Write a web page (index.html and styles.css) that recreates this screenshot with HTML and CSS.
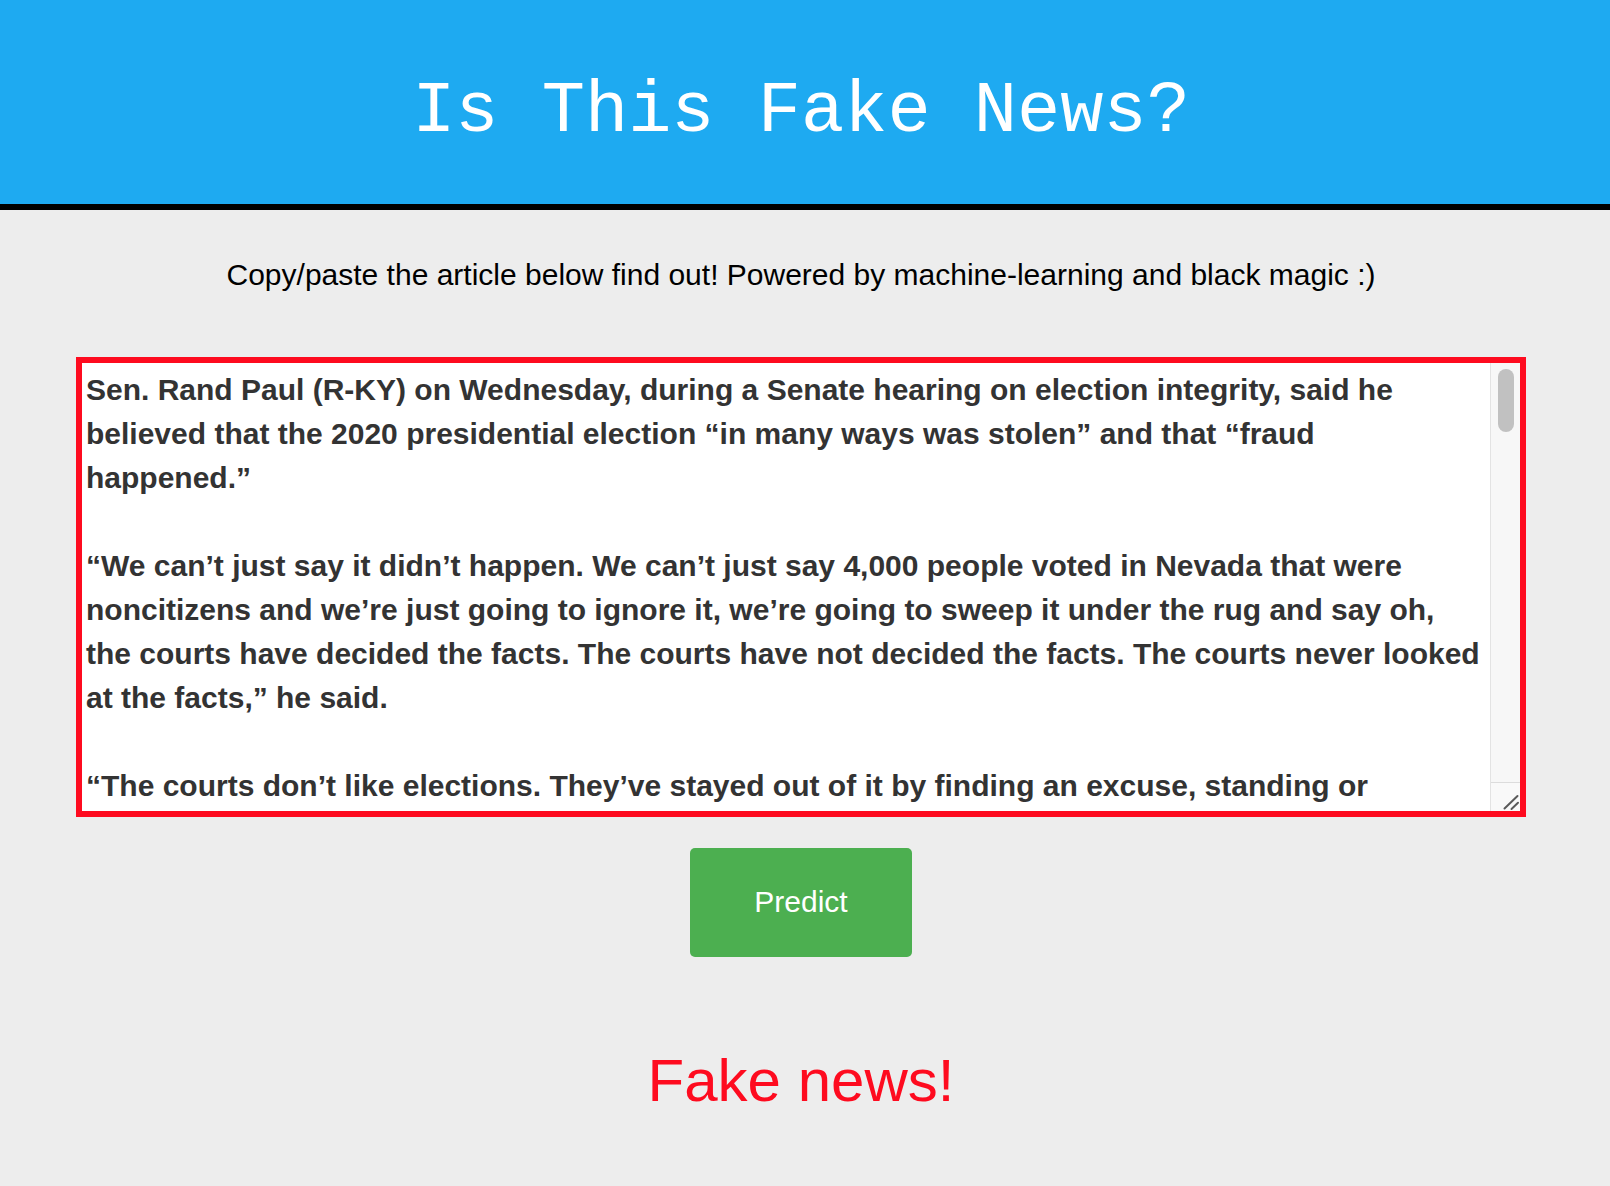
FILE: index.html
```html
<!DOCTYPE html>
<html lang="en">
<head>
<meta charset="utf-8">
<title>Is This Fake News?</title>
<link rel="stylesheet" href="styles.css">
</head>
<body>
<header class="hero">
  <h1 class="title">Is This Fake News?</h1>
</header>
<main class="content">
  <p class="lead">Copy/paste the article below find out! Powered by machine-learning and black magic :)</p>
  <form class="form">
    <div class="editor">
      <textarea class="article" name="article">Sen. Rand Paul (R-KY) on Wednesday, during a Senate hearing on election integrity, said he believed that the 2020 presidential election “in many ways was stolen” and that “fraud happened.”

“We can’t just say it didn’t happen. We can’t just say 4,000 people voted in Nevada that were noncitizens and we’re just going to ignore it, we’re going to sweep it under the rug and say oh, the courts have decided the facts. The courts have not decided the facts. The courts never looked at the facts,” he said.

“The courts don’t like elections. They’ve stayed out of it by finding an excuse, standing or something else, but they have never actually sat down and examined the evidence,” Paul continued.

The Kentucky Republican made the remarks during a Senate Rules Committee hearing on the For the People Act, a sweeping elections bill that Democrats have named as one of their top legislative priorities for the year.

Paul argued that the bill would make permanent many of the changes to voting procedures that states adopted during the coronavirus pandemic, including the expansion of mail-in ballots and the use of drop boxes.

Democrats on the committee pushed back on the senator’s claims, noting that election officials from both parties in every state certified the results and that dozens of lawsuits challenging the outcome were dismissed.

The bill passed the House earlier this month on a largely party-line vote, but it faces long odds in the evenly divided Senate, where it would need the support of at least ten Republicans to overcome a filibuster.</textarea>
      <div class="scrollbar" aria-hidden="true">
        <div class="scrollbar-track">
          <div class="scrollbar-thumb"></div>
        </div>
        <div class="resizer">
          <svg class="grip" width="29" height="28" viewBox="0 0 29 28">
            <line x1="13.5" y1="25.5" x2="26.5" y2="13" stroke="#5a5a5a" stroke-width="2" stroke-linecap="round"/>
            <line x1="20.5" y1="26" x2="27" y2="19.8" stroke="#5a5a5a" stroke-width="2" stroke-linecap="round"/>
          </svg>
        </div>
      </div>
    </div>
    <button class="predict" type="button">Predict</button>
  </form>
  <p class="verdict">Fake news!</p>
</main>
</body>
</html>
```

FILE: styles.css
```css
html, body {
  margin: 0;
  padding: 0;
}

body {
  background: #ededed;
  font-family: "Liberation Sans", Arial, sans-serif;
  color: #000;
}

.hero {
  box-sizing: border-box;
  height: 210px;
  padding: 19px 8px 0 0;
  background: #1eaaf1;
  border-bottom: 6px solid #000;
  display: flex;
  align-items: center;
  justify-content: center;
}

.title {
  margin: 0;
  font-family: "Liberation Mono", "Courier New", monospace;
  font-weight: normal;
  font-size: 72px;
  color: #fff;
}

.content {
  display: flex;
  flex-direction: column;
  align-items: center;
  padding: 48px 8px 0 0;
}

.lead {
  margin: 0;
  font-size: 30px;
}

.form {
  display: flex;
  flex-direction: column;
  align-items: center;
  margin-top: 65px;
}

.editor {
  box-sizing: border-box;
  width: 1450px;
  height: 460px;
  border: 6px solid #fe0b1f;
  background: #fff;
  display: flex;
}

.article {
  box-sizing: border-box;
  flex: 1;
  min-width: 0;
  height: 100%;
  margin: 0;
  padding: 5px 8px 3px 4px;
  border: none;
  border-radius: 0;
  background: #fff;
  color: #333;
  font-family: "Liberation Sans", Arial, sans-serif;
  font-weight: 700;
  font-size: 30px;
  line-height: 44px;
  outline: none;
  resize: none;
  overflow: hidden;
}

.scrollbar {
  box-sizing: border-box;
  width: 30px;
  flex: none;
  display: flex;
  flex-direction: column;
  background: #f7f7f7;
  border-left: 1px solid #e3e3e3;
}

.scrollbar-track {
  flex: 1;
  padding: 6px 6px 0 7px;
}

.scrollbar-thumb {
  width: 16px;
  height: 63px;
  border-radius: 8px;
  background: #c1c1c1;
}

.resizer {
  height: 28px;
  border-top: 1px solid #dcdcdc;
  background: #f9f9f9;
}

.grip {
  display: block;
}

.predict {
  box-sizing: border-box;
  width: 222px;
  height: 109px;
  margin-top: 31px;
  padding: 0 0 2px;
  border: none;
  border-radius: 5px;
  background: #4caf50;
  color: #fff;
  font-family: "Liberation Sans", Arial, sans-serif;
  font-size: 30px;
  cursor: pointer;
}

.verdict {
  margin: 89px 0 0;
  font-size: 60px;
  color: #fe0b1f;
}
```
